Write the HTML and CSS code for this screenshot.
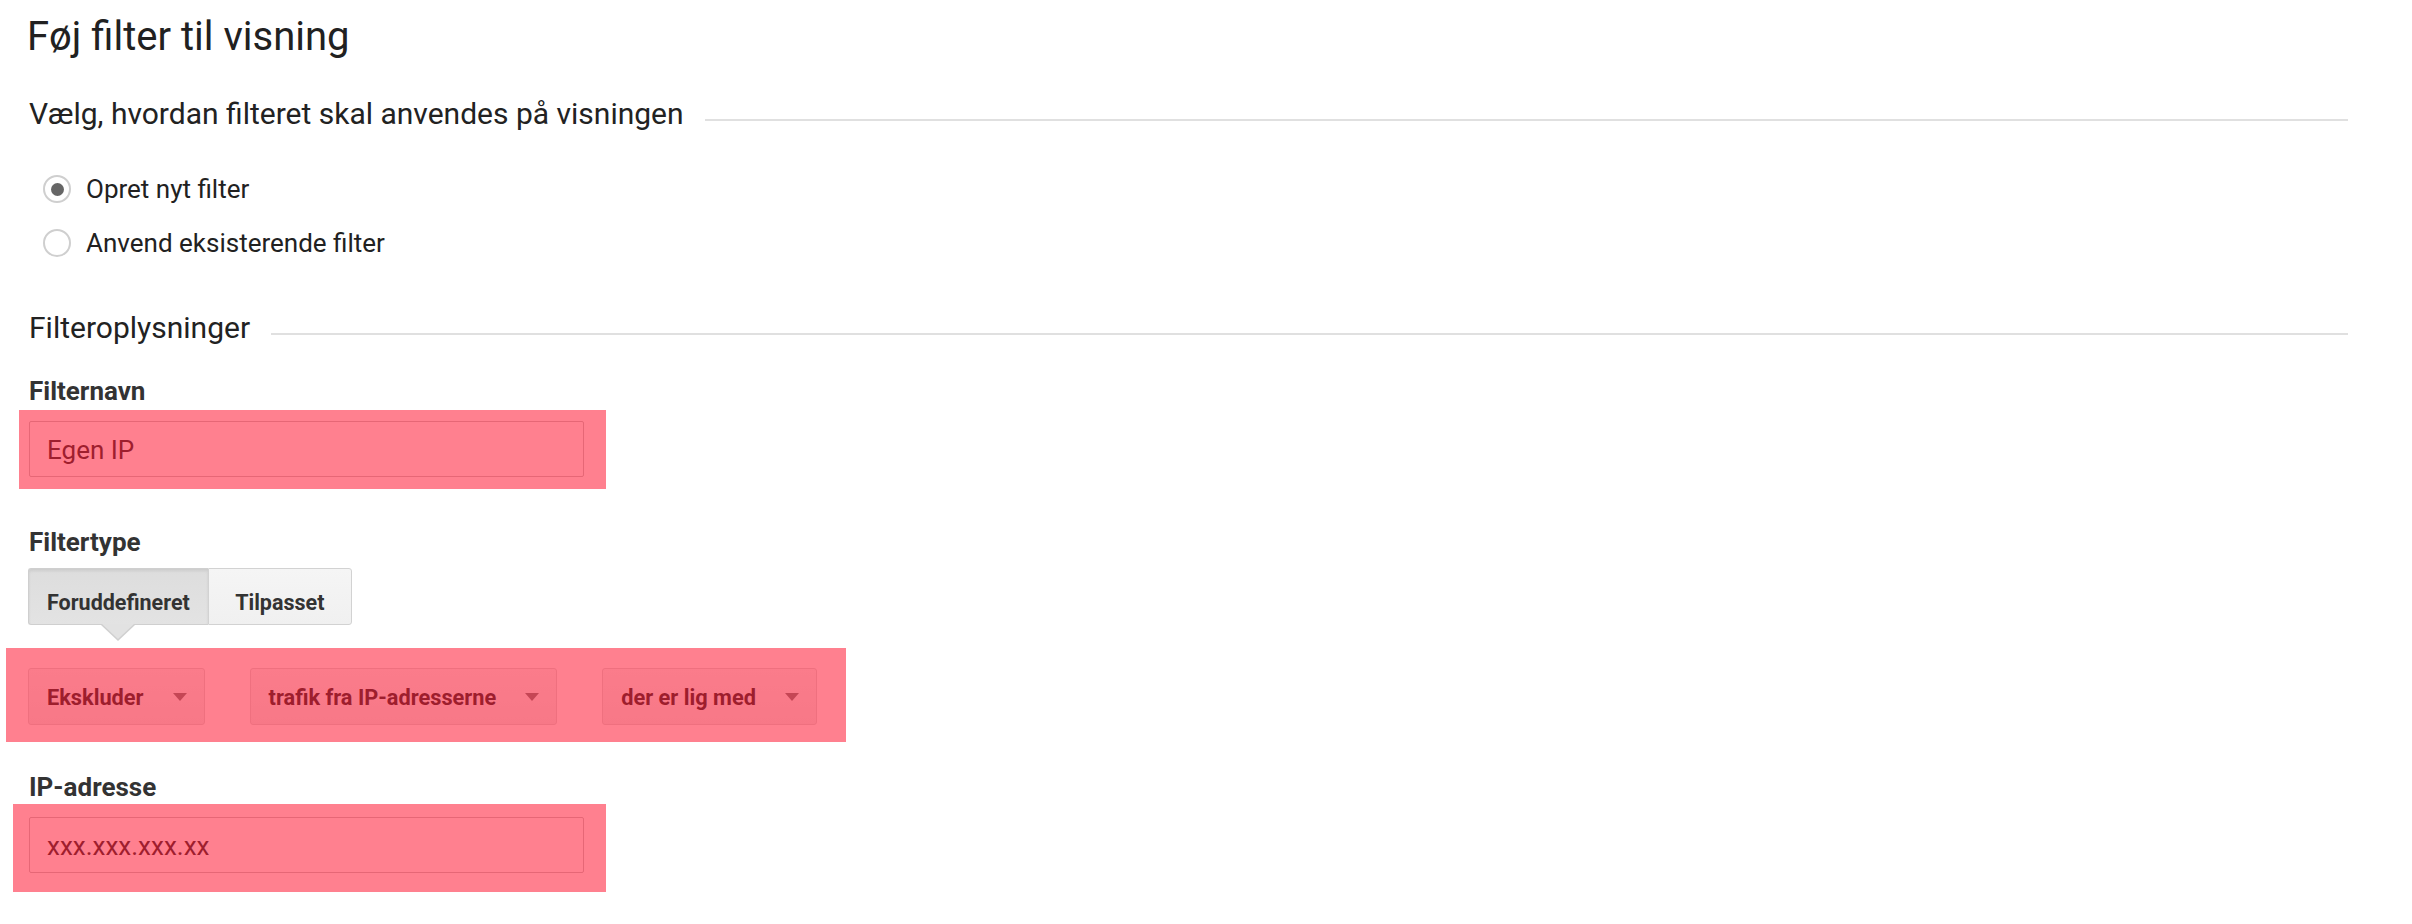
FILE: index.html
```html
<!DOCTYPE html>
<html lang="da">
<head>
<meta charset="utf-8">
<title>Føj filter til visning</title>
<link rel="stylesheet" href="styles.css">
</head>
<body>
<div class="page">
  <h1 class="title">Føj filter til visning</h1>

  <div class="section-head first">
    <h2 class="section-title">Vælg, hvordan filteret skal anvendes på visningen</h2>
    <span class="rule"></span>
  </div>

  <div class="radios">
    <label class="radio-row"><span class="radio checked"></span><span class="radio-label">Opret nyt filter</span></label>
    <label class="radio-row"><span class="radio"></span><span class="radio-label">Anvend eksisterende filter</span></label>
  </div>

  <div class="section-head second">
    <h2 class="section-title">Filteroplysninger</h2>
    <span class="rule"></span>
  </div>

  <div class="field-label label-name">Filternavn</div>
  <div class="hl hl-name">
    <div class="text-input">Egen IP</div>
  </div>

  <div class="field-label label-type">Filtertype</div>
  <div class="toggle">
    <span class="toggle-btn active">Foruddefineret</span>
    <span class="toggle-btn">Tilpasset</span>
  </div>

  <div class="hl hl-selects">
    <div class="select sel-1"><span>Ekskluder</span><i class="caret"></i></div>
    <div class="select sel-2"><span>trafik fra IP-adresserne</span><i class="caret"></i></div>
    <div class="select sel-3"><span>der er lig med</span><i class="caret"></i></div>
  </div>

  <div class="field-label label-ip">IP-adresse</div>
  <div class="hl hl-ip">
    <div class="text-input">xxx.xxx.xxx.xx</div>
  </div>
</div>
</body>
</html>
```

FILE: styles.css
```css
* { box-sizing: border-box; }

html, body {
  margin: 0;
  padding: 0;
  background: #fff;
}

body {
  font-family: Roboto, "Noto Sans", "Liberation Sans", sans-serif;
  color: #333;
}

.page {
  padding: 13px 64px 0 29px;
  width: 2412px;
}

.title {
  margin: 0 0 0 -2px;
  font-size: 40px;
  line-height: 47px;
  font-weight: 400;
  color: #212121;
}

.section-head {
  display: flex;
  align-items: flex-start;
  width: 2319px;
}

.section-head.first { margin-top: 37px; }
.section-head.second { margin-top: 50px; }

.section-title {
  margin: 0;
  font-size: 30px;
  line-height: 34px;
  font-weight: 400;
  color: #222;
  white-space: nowrap;
}

.rule {
  flex: 1;
  height: 2px;
  background: #e0e0e0;
  margin-left: 21px;
  margin-top: 22px;
}

.radios {
  margin-top: 40px;
  margin-left: 14px;
  display: flex;
  flex-direction: column;
  gap: 18px;
}

.radio-row {
  display: flex;
  align-items: center;
  height: 36px;
}

.radio {
  width: 28px;
  height: 28px;
  border-radius: 50%;
  border: 2px solid #cfcfcf;
  background: #fff;
  display: flex;
  align-items: center;
  justify-content: center;
  flex: none;
}

.radio.checked::before {
  content: "";
  width: 13px;
  height: 13px;
  border-radius: 50%;
  background: #666;
}

.radio-label {
  margin-left: 15px;
  font-size: 26px;
  line-height: 36px;
  color: #212121;
}

.field-label {
  font-size: 26px;
  line-height: 32px;
  font-weight: 700;
  color: #333;
}

.label-name { margin-top: 30px; }
.label-type { margin-top: 37px; }
.label-ip { margin-top: 29px; }

/* pink annotation highlight laid over the controls */
.hl {
  position: relative;
  width: fit-content;
}

.hl::after {
  content: "";
  position: absolute;
  inset: 0;
  background: rgba(255, 1, 31, 0.5);
  pointer-events: none;
}

.hl-name {
  margin-top: 3px;
  margin-left: -10px;
  padding: 11px 22px 12px 10px;
}

.hl-ip {
  margin-top: 1px;
  margin-left: -16px;
  padding: 13px 22px 19px 16px;
}

.hl-selects {
  margin-top: 23px;
  margin-left: -23px;
  padding: 20px 29px 17px 22px;
  display: flex;
  gap: 45px;
}

.text-input {
  width: 555px;
  height: 56px;
  border: 1px solid #cccccc;
  border-radius: 2px;
  background: #fff;
  padding: 2px 17px 0;
  display: flex;
  align-items: center;
  font-size: 26px;
  line-height: 30px;
  color: #3d3d3d;
}

.toggle {
  margin-top: 10px;
  display: flex;
  position: relative;
  width: fit-content;
  margin-left: -1px;
}

.toggle-btn {
  display: block;
  height: 57px;
  padding: 21px 18px 0 18px;
  font-size: 21.5px;
  line-height: 26px;
  font-weight: 700;
  color: #333;
  border: 1px solid #d2d2d2;
  background: linear-gradient(#f5f5f5, #f0f0f0);
  text-align: center;
}

.toggle-btn:first-child {
  border-radius: 3px 0 0 3px;
  border-right: none;
}

.toggle-btn:last-child {
  border-radius: 0 3px 3px 0;
  min-width: 144px;
}

.toggle-btn.active {
  position: relative;
  background: linear-gradient(#dddddd, #e3e3e3);
  box-shadow: inset 0 2px 3px rgba(0, 0, 0, 0.08);
  border-color: #cfcfcf;
}

.toggle-btn.active::before,
.toggle-btn.active::after {
  content: "";
  position: absolute;
  left: 50%;
  width: 0;
  height: 0;
  border-style: solid;
  border-color: transparent;
}

.toggle-btn.active::before {
  top: 56px;
  margin-left: -17px;
  border-width: 16px 17px 0 17px;
  border-top-color: #cfcfcf;
}

.toggle-btn.active::after {
  top: 55px;
  margin-left: -16px;
  border-width: 15px 16px 0 16px;
  border-top-color: #e2e2e2;
}

.select {
  display: flex;
  align-items: center;
  height: 57px;
  padding: 3px 17px 0 18px;
  border: 1px solid #dedede;
  border-radius: 3px;
  background: linear-gradient(#f6f6f6, #efefef);
  font-size: 21.75px;
  line-height: 26px;
  font-weight: 700;
  color: #3a3a3a;
  white-space: nowrap;
}

.caret {
  margin-left: 29px;
  width: 0;
  height: 0;
  border-style: solid;
  border-width: 8px 7px 0 7px;
  border-color: #8a8a8a transparent transparent transparent;
  margin-top: -2px;
}
```
